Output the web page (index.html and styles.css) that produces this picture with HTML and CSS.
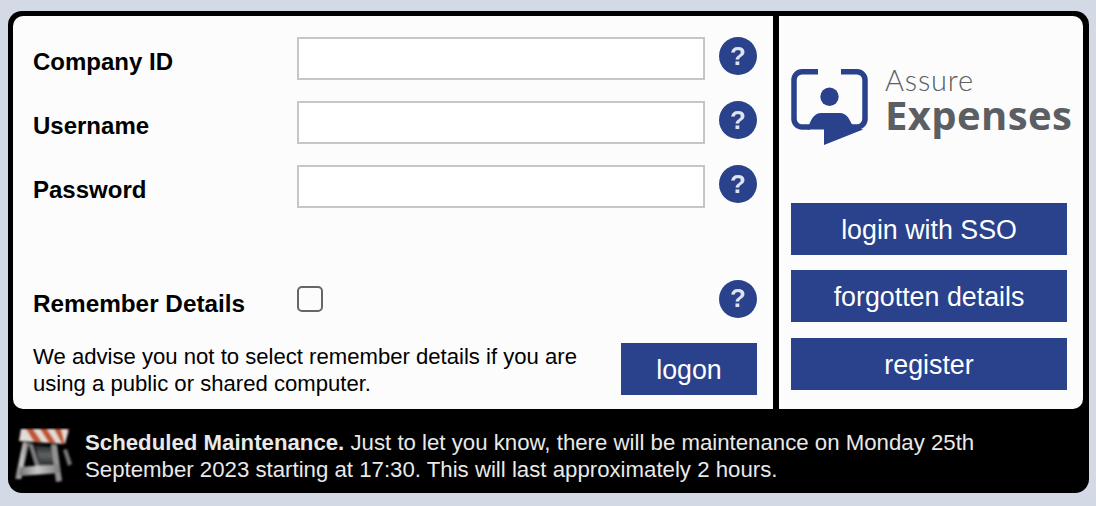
FILE: index.html
```html
<!DOCTYPE html>
<html lang="en">
<head>
<meta charset="utf-8">
<title>Assure Expenses</title>
<link rel="stylesheet" href="styles.css">
</head>
<body>
<main class="shell">
  <div class="panels">
    <form class="login">
      <div class="row">
        <label class="label">Company ID</label>
        <input class="field" type="text">
        <span class="help">?</span>
      </div>
      <div class="row">
        <label class="label">Username</label>
        <input class="field" type="text">
        <span class="help">?</span>
      </div>
      <div class="row">
        <label class="label">Password</label>
        <input class="field" type="password">
        <span class="help">?</span>
      </div>
      <div class="row row-remember">
        <label class="label">Remember Details</label>
        <span class="check-cell"><span class="check"></span></span>
        <span class="help">?</span>
      </div>
      <div class="advice">
        <p class="advice-text">We advise you not to select remember details if you are using a public or shared computer.</p>
        <button class="btn btn-logon" type="button">logon</button>
      </div>
    </form>
    <aside class="side">
      <div class="logo">
        <svg class="logo-mark" viewBox="0 0 78 77" width="78" height="77" aria-hidden="true">
          <path d="M27 2.75H11a8 8 0 0 0-8 8V50a8 8 0 0 0 8 8h8M50 2.75h16a8 8 0 0 1 8 8V50a8 8 0 0 1-8 8h-7" fill="none" stroke="#2a418c" stroke-width="5.5"/>
          <circle cx="38.5" cy="27.7" r="9.2" fill="#2a418c"/>
          <path d="M17 60.5C19 50 24 44 30 44H49C55 44 58 49 61 55.5L72 60.5L33 76V60.5Z" fill="#2a418c"/>
        </svg>
        <div class="logo-text">
          <span class="logo-assure">Assure</span>
          <span class="logo-expenses">Expenses</span>
        </div>
      </div>
      <div class="side-buttons">
        <button class="btn" type="button">login with SSO</button>
        <button class="btn" type="button">forgotten details</button>
        <button class="btn" type="button">register</button>
      </div>
    </aside>
  </div>
  <div class="notice">
    <svg class="notice-icon" viewBox="0 0 62 56" width="62" height="56" aria-hidden="true">
      <defs>
        <filter id="soft" x="-5%" y="-5%" width="110%" height="110%"><feGaussianBlur stdDeviation="1"/></filter>
        <linearGradient id="metal" x1="0" y1="0" x2="1" y2="0">
          <stop offset="0" stop-color="#707070"/><stop offset="0.45" stop-color="#c8c8c8"/><stop offset="1" stop-color="#7a7a7a"/>
        </linearGradient>
        <linearGradient id="panel" x1="0" y1="0" x2="0" y2="1">
          <stop offset="0" stop-color="#242424"/><stop offset="0.5" stop-color="#606466"/><stop offset="1" stop-color="#303030"/>
        </linearGradient>
      </defs>
      <g filter="url(#soft)">
        <path d="M21 17L39 19L41 35L26 37Z" fill="url(#panel)"/>
        <path d="M14 15L19 16L26 38L21 38Z" fill="#7c7c7c"/>
        <path d="M49 22L53 21L58 36L54 38Z" fill="#767676"/>
        <path d="M9 14L15 15L7 51L1 51Z" fill="url(#metal)"/>
        <path d="M37 16L43 17L48 53L42 54Z" fill="#929292"/>
        <path d="M6 39L45 36L46 45L5 48Z" fill="url(#metal)"/>
        <path d="M7 1H55L51 16L5 13Z" fill="#e2dcd7"/>
        <path d="M12 1H19L28 14L20 14ZM26 1H33L42 15L35 15ZM40 1H47L51 16L48 16ZM53 1H55L54 7Z" fill="#c25432"/>
      </g>
    </svg>
    <p class="notice-text"><strong>Scheduled Maintenance.</strong> Just to let you know, there will be maintenance on Monday 25th<br>September 2023 starting at 17:30. This will last approximately 2 hours.</p>
  </div>
</main>
</body>
</html>
```

FILE: styles.css
```css
* { box-sizing: border-box; }

html, body { height: 100%; overflow: hidden; }

body {
  margin: 0;
  padding: 11px 8px 0;
  background: #d4d9e6;
  font-family: "Liberation Sans", Arial, sans-serif;
}

.shell {
  width: 1081px;
  height: 482px;
  background: #000;
  border-radius: 14px;
  padding: 5px 5px 0;
}

.panels {
  display: flex;
  gap: 6px;
  height: 393px;
}

.login {
  width: 760px;
  background: #fcfcfc;
  border-radius: 10px 0 0 10px;
  padding: 21px 16px 0 20px;
}

.side {
  width: 304px;
  background: #fcfcfc;
  border-radius: 0 10px 10px 0;
  padding: 53px 12px 0 12px;
}

.row {
  display: grid;
  grid-template-columns: 264px 408px 1fr;
  align-items: start;
  height: 43px;
  margin-bottom: 21px;
}

.row-remember {
  margin-top: 71px;
  margin-bottom: 0;
  height: 38px;
  align-items: center;
}

.label {
  padding-top: 11px;
  font-size: 24px;
  line-height: 28px;
  font-weight: 700;
  color: #000;
}

.row-remember .label {
  padding-top: 11px;
  font-size: 24.3px;
}

.field {
  width: 408px;
  height: 43px;
  border: 2px solid #c6c6c6;
  background: #fff;
  margin: 0;
  padding: 0;
}

.help {
  display: flex;
  align-items: center;
  justify-content: center;
  justify-self: end;
  width: 38px;
  height: 38px;
  border-radius: 50%;
  background: #2a418c;
  color: #dfe3ef;
  font-size: 26px;
  font-weight: 700;
  filter: blur(0.6px);
}

.check-cell { display: flex; align-items: center; }

.check {
  display: block;
  width: 26px;
  height: 26px;
  border: 2px solid #666;
  border-radius: 5px;
  background: #fcfcfc;
}

.advice {
  display: flex;
  justify-content: space-between;
  align-items: flex-start;
  margin-top: 26px;
}

.advice-text {
  width: 570px;
  margin: 0;
  font-size: 22.12px;
  line-height: 27px;
  color: #000;
}

.btn {
  display: block;
  height: 52px;
  border: 0;
  padding: 2px 0 0;
  background: #2a418c;
  color: #fff;
  font-family: inherit;
  font-size: 26.8px;
}

.btn-logon { width: 136px; }

.logo {
  display: flex;
  height: 134px;
  gap: 16px;
}

.logo-mark { flex: none; }

.logo-text { display: flex; flex-direction: column; }

.logo-assure {
  font-family: Lato, sans-serif;
  font-weight: 300;
  font-size: 29px;
  letter-spacing: 0.8px;
  line-height: 22px;
  color: #5b5e62;
}

.logo-expenses {
  font-family: "Open Sans", sans-serif;
  font-weight: 700;
  font-size: 40px;
  letter-spacing: 0.4px;
  line-height: 48px;
  color: #5b5e62;
}

.side-buttons {
  display: flex;
  flex-direction: column;
  gap: 15px;
}

.side-buttons .btn { width: 276px; }

.side-buttons .btn:last-child { margin-top: 1px; }

.notice {
  display: flex;
  align-items: flex-start;
  gap: 9px;
  padding: 19px 0 0 1px;
  color: #e9e9e9;
}

.notice-icon { flex: none; }

.notice-text {
  margin: 0;
  padding-top: 1px;
  font-size: 22.22px;
  line-height: 27px;
}
```
